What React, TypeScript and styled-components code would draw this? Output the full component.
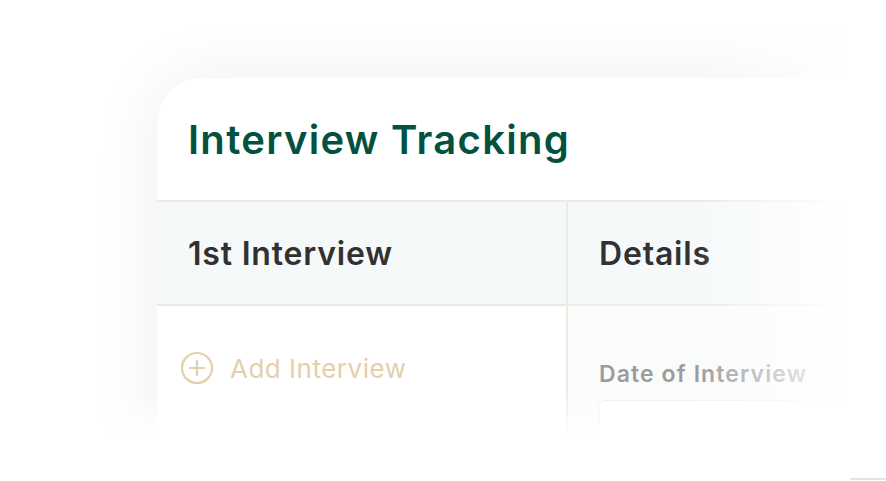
import React from "react";
import styled, { createGlobalStyle } from "styled-components";

const GlobalStyle = createGlobalStyle`
  html, body {
    margin: 0;
    padding: 0;
    background: #ffffff;
  }
  body {
    font-family: "Inter", "Noto Sans", sans-serif;
  }
`;

const Stage = styled.div`
  position: relative;
  width: 886px;
  height: 481px;
  overflow: hidden;
  padding: 78px 0 0 157px;
  box-sizing: border-box;
  background: #ffffff;
`;

const Card = styled.section`
  width: 820px;
  height: 460px;
  background: #ffffff;
  border-top-left-radius: 46px;
  box-shadow: 0 0 70px rgba(0, 0, 0, 0.07);
  display: flex;
  flex-direction: column;
`;

const TitleBar = styled.header`
  height: 122px;
  display: flex;
  align-items: center;
  padding-left: 31px;
  box-sizing: border-box;
`;

const Title = styled.h1`
  margin: 0;
  font-size: 40px;
  font-weight: 600;
  color: #03513f;
  letter-spacing: 1.3px;
`;

const Table = styled.div`
  display: grid;
  grid-template-columns: 409px 1fr;
  grid-template-rows: 104px 1fr;
  flex: 1;
  border-top: 2px solid #f2e9e0;
`;

const HeadCell = styled.div<{ $last?: boolean }>`
  background: #f6f9fa;
  display: flex;
  align-items: center;
  padding-left: ${(p) => (p.$last ? "31px" : "31px")};
  border-bottom: 2px solid ${(p) => (p.$last ? "#f3ebe3" : "#e7e8e8")};
  border-left: ${(p) => (p.$last ? "2px solid #f2e9e0" : "none")};
  font-size: 32px;
  font-weight: 600;
  color: #313131;
  letter-spacing: 0.8px;
`;

const BodyCell = styled.div<{ $shaded?: boolean }>`
  background: ${(p) => (p.$shaded ? "#fafbfb" : "#ffffff")};
  border-left: ${(p) => (p.$shaded ? "2px solid #f2e9e0" : "none")};
  padding: ${(p) => (p.$shaded ? "54px 0 0 31px" : "45px 0 0 23px")};
  display: flex;
  flex-direction: column;
  gap: 12px;
`;

const AddButton = styled.button`
  display: flex;
  align-items: center;
  gap: 16px;
  background: none;
  border: none;
  padding: 0;
  cursor: pointer;
  font-family: "Inter", "Noto Sans", sans-serif;
  font-size: 26px;
  font-weight: 400;
  letter-spacing: 0.5px;
  color: #e3d0ab;
`;

const FieldLabel = styled.label`
  font-size: 23px;
  font-weight: 600;
  letter-spacing: 1.1px;
  color: #9c9c9c;
`;

const FieldInput = styled.div`
  width: 260px;
  height: 56px;
  border: 1.5px solid #efefef;
  border-radius: 6px;
  background: #ffffff;
`;

const FadeRight = styled.div`
  position: absolute;
  top: 0;
  right: 0;
  width: 190px;
  height: 100%;
  background: linear-gradient(to right, rgba(255, 255, 255, 0), #ffffff 80%);
  pointer-events: none;
`;

const FadeBottom = styled.div`
  position: absolute;
  left: 0;
  bottom: 0;
  width: 100%;
  height: 90px;
  background: linear-gradient(to bottom, rgba(255, 255, 255, 0), #ffffff 50%);
  pointer-events: none;
`;

const EdgeLine = styled.div`
  position: absolute;
  right: 0;
  bottom: 1px;
  width: 36px;
  height: 2px;
  background: #e4e4e4;
`;

const PlusCircle = () => (
  <svg width="34" height="34" viewBox="0 0 34 34" fill="none">
    <circle cx="17" cy="17" r="15" stroke="#e3d0ab" strokeWidth="2.2" />
    <path d="M17 10v14M10 17h14" stroke="#e3d0ab" strokeWidth="2.2" strokeLinecap="round" />
  </svg>
);

export default function App() {
  return (
    <>
      <GlobalStyle />
      <Stage>
        <Card>
          <TitleBar>
            <Title>Interview Tracking</Title>
          </TitleBar>
          <Table>
            <HeadCell>1st Interview</HeadCell>
            <HeadCell $last>Details</HeadCell>
            <BodyCell>
              <AddButton>
                <PlusCircle />
                Add Interview
              </AddButton>
            </BodyCell>
            <BodyCell $shaded>
              <FieldLabel>Date of Interview</FieldLabel>
              <FieldInput />
            </BodyCell>
          </Table>
        </Card>
        <FadeRight />
        <FadeBottom />
        <EdgeLine />
      </Stage>
    </>
  );
}
